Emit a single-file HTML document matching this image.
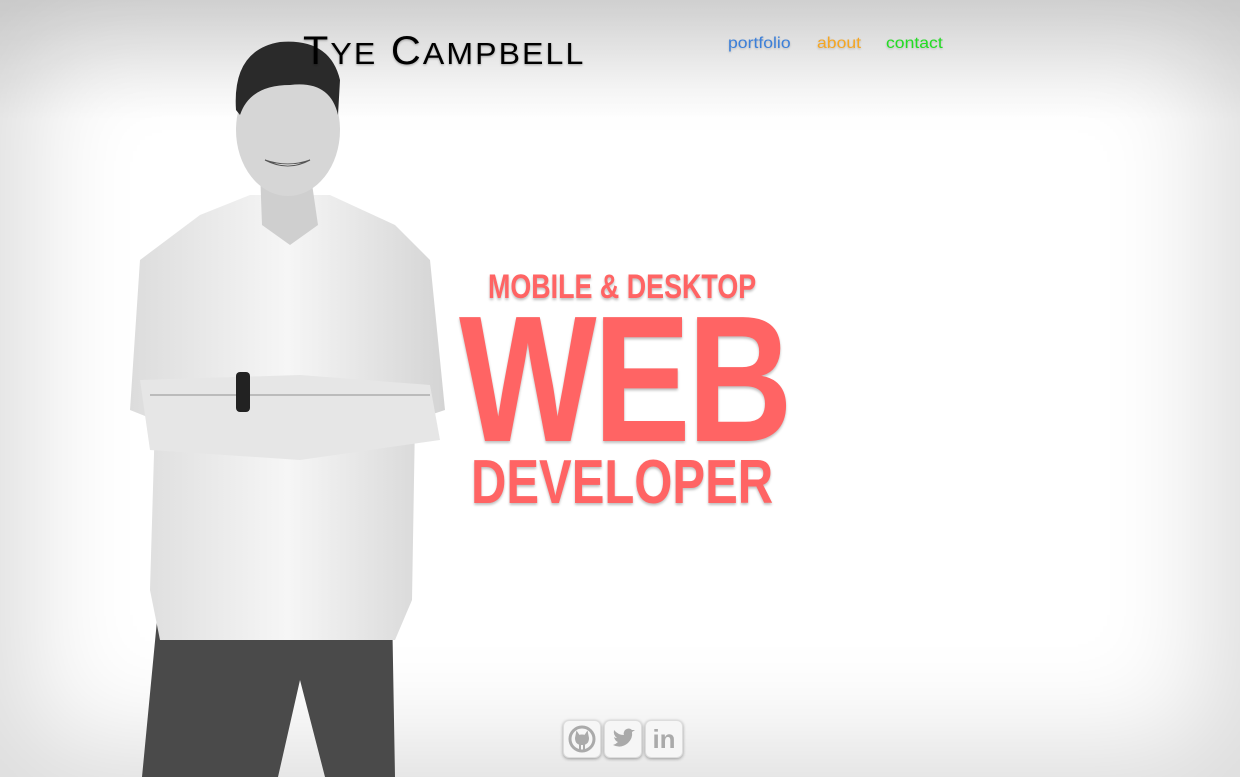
<!DOCTYPE html>
<html><head><style>
html,body{margin:0;padding:0}
body{width:1240px;height:777px;overflow:hidden;position:relative;font-family:"Liberation Sans",sans-serif;background:#fff}
.bg{position:absolute;inset:0;box-shadow:inset 0 0 110px 30px rgba(0,0,0,0.14);}
.bg2{position:absolute;left:0;top:0;width:1240px;height:120px;background:linear-gradient(#e6e6e6,rgba(255,255,255,0))}
.t{position:absolute;font-family:"Liberation Sans",sans-serif;font-weight:bold;color:#ff6464;text-shadow:0 2px 3px rgba(0,0,0,0.25);white-space:nowrap;transform-origin:0 0}
.nav{position:absolute;top:35px;font-size:16px;text-shadow:0 1px 2px rgba(0,0,0,0.2);transform:scaleX(1.1);transform-origin:0 0}
.ic{position:absolute;top:720px;width:36px;height:36px;border-radius:6px;background:#f6f6f6;box-shadow:0 1px 3px rgba(0,0,0,.35);border:1px solid #ddd}
</style></head><body>
<div class="bg2"></div>
<div class="bg"></div>
<svg width="1240" height="777" style="position:absolute;left:0;top:0">
 <defs><linearGradient id="sh" x1="0" x2="1"><stop offset="0" stop-color="#dcdcdc"/><stop offset=".5" stop-color="#f6f6f6"/><stop offset="1" stop-color="#d4d4d4"/></linearGradient></defs>
 <path d="M158 610 L392 605 L395 777 L325 777 L300 680 L278 777 L142 777 Z" fill="#4a4a4a"/>
 <path d="M200 215 L250 195 L330 195 L395 225 L430 260 L445 410 L415 420 L412 600 L395 640 L160 640 L150 590 L155 420 L130 410 L140 260 Z" fill="url(#sh)"/>
 <path d="M140 380 L300 375 L430 385 L440 440 L300 460 L150 450 Z" fill="#e6e6e6"/>
 <path d="M150 395 L430 395" stroke="#bbb" stroke-width="2"/>
 <rect x="236" y="372" width="14" height="40" rx="4" fill="#222"/>
 <path d="M260 170 L310 170 L318 225 L290 245 L262 225 Z" fill="#cfcfcf"/>
 <ellipse cx="288" cy="130" rx="52" ry="66" fill="#d6d6d6"/>
 <path d="M236 110 Q232 50 280 42 Q330 38 340 80 L338 115 Q330 80 290 85 Q250 85 240 115 Z" fill="#2a2a2a"/>
 <path d="M265 160 Q288 172 310 160 Q288 168 265 160Z" fill="#fff" stroke="#555"/>
</svg>
<div style="position:absolute;left:303px;top:29px;font-family:'Liberation Sans',sans-serif;font-size:40px;color:#000;letter-spacing:2px;transform:scaleX(1.035);transform-origin:0 0;text-shadow:0 1px 2px rgba(0,0,0,.3);white-space:nowrap">T<span style="font-size:31px">YE</span> C<span style="font-size:31px">AMPBELL</span></div>
<div class="nav" style="left:728px;color:#3b7fd9">portfolio</div>
<div class="nav" style="left:817px;color:#f5a623">about</div>
<div class="nav" style="left:886px;color:#22dd22">contact</div>
<div class="t" style="left:488px;top:268px;font-size:34px;transform:scaleX(0.79)">MOBILE &amp; DESKTOP</div>
<div class="t" style="left:459px;top:290px;font-size:180px;line-height:180px;letter-spacing:-4px;transform:scaleX(0.81)">WEB</div>
<div class="t" style="left:471px;top:450px;font-size:62px;line-height:66px;transform:scaleX(0.79)">DEVELOPER</div>
<div class="ic" style="left:563px"><svg width="36" height="36" viewBox="0 0 36 36"><circle cx="18" cy="18" r="12" fill="none" stroke="#aaa" stroke-width="3"/><path d="M13 12 L15 15 Q18 14 21 15 L23 12 L24 17 Q24 23 18 23 Q12 23 12 17Z M16 23 L16 30 M20 23 L20 30" fill="#aaa" stroke="#aaa" stroke-width="2"/></svg></div>
<div class="ic" style="left:604px"><svg width="36" height="36" viewBox="0 0 36 36"><path d="M8 24 Q16 28 23 22 Q28 17 27 11 L30 9 L27 9 Q24 6 20 9 Q18 12 19 14 Q13 14 9 9 Q8 14 12 17 Q10 17 9 16 Q10 20 13 21 Q11 23 8 24Z" fill="#aaa"/></svg></div>
<div class="ic" style="left:645px"><div style="font:bold 26px 'Liberation Sans',sans-serif;color:#aaa;text-align:center;line-height:36px">in</div></div>
</body></html>
